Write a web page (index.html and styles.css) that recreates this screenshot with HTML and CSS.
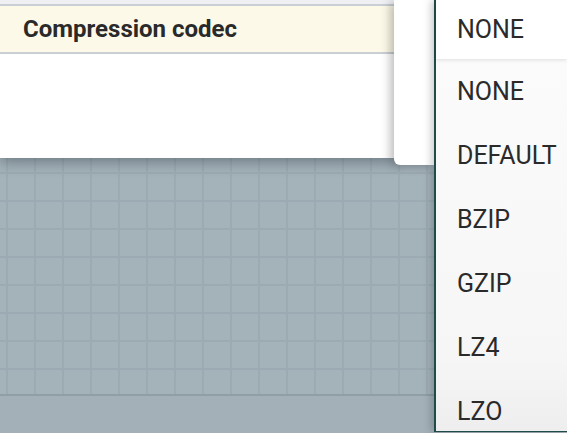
FILE: index.html
```html
<!DOCTYPE html>
<html>
<head>
<meta charset="utf-8">
<link rel="stylesheet" href="styles.css">
</head>
<body>
<div class="stage">
  <div class="canvas"></div>
  <div class="footer"></div>

  <div class="dialog">
    <div class="dialog-top"></div>
    <div class="prop-row">Compression codec</div>
  </div>
  <div class="host"></div>

  <div class="dropdown">
    <div class="selected">NONE</div>
    <ul class="options">
      <li>NONE</li>
      <li>DEFAULT</li>
      <li>BZIP</li>
      <li>GZIP</li>
      <li>LZ4</li>
      <li>LZO</li>
    </ul>
  </div>
</div>
</body>
</html>
```

FILE: styles.css
```css
html, body {
  margin: 0;
  padding: 0;
}
body {
  width: 567px;
  height: 433px;
  overflow: hidden;
  font-family: Roboto, "Liberation Sans", sans-serif;
}
.stage {
  position: relative;
  width: 567px;
  height: 433px;
  display: flex;
  flex-direction: column;
  background: #a3b0b8;
}
.canvas {
  height: 394px;
  flex: none;
  background-color: #a4b2ba;
  background-image:
    linear-gradient(to right, #9cabb3 2px, transparent 2px),
    linear-gradient(to bottom, #9cabb3 2px, transparent 2px);
  background-size: 28px 28px;
  background-position: 6px 4px;
}
.footer {
  flex: 1;
  border-top: 2px solid #909ea6;
  background: #a3b0b8;
}
.dialog {
  position: absolute;
  left: 0;
  top: 0;
  width: 394px;
  height: 158px;
  background: #fff;
  box-shadow: 0 3px 14px rgba(30, 40, 50, 0.45);
}
.dialog-top {
  height: 4px;
  background: #eef0f4;
}
.prop-row {
  height: 46px;
  border-top: 2px solid #c9cfd4;
  border-bottom: 2px solid #c9cfd4;
  background: #fdf9e8;
  padding-left: 23px;
  display: flex;
  align-items: center;
  font-weight: 700;
  font-size: 24px;
  color: #2a2a2a;
}
.host {
  position: absolute;
  left: 394px;
  top: 0;
  width: 41px;
  height: 165px;
  background: #fff;
  border-bottom-left-radius: 6px;
  box-shadow: -4px 2px 10px rgba(0, 0, 0, 0.25);
}
.dropdown {
  position: absolute;
  left: 434px;
  top: 0;
  width: 131px;
  height: 431px;
  border-left: 2px solid #1f4b4b;
  border-bottom: 1px solid #1f4b4b;
  background: #fff;
  box-shadow: -3px 0 8px rgba(0, 0, 0, 0.2);
  color: #2a2a2a;
  font-size: 25px;
}
.selected {
  height: 59px;
  display: flex;
  align-items: center;
  padding-left: 21px;
  background: #fff;
  position: relative;
  z-index: 1;
  box-shadow: 0 1px 4px rgba(0, 0, 0, 0.12);
}
.options {
  list-style: none;
  margin: 0;
  padding: 0;
  height: 372px;
  background: linear-gradient(to bottom, #fbfbfb, #f6f6f6 80%, #eeeeee);
}
.options li {
  height: 64px;
  display: flex;
  align-items: center;
  padding-left: 21px;
}
```
